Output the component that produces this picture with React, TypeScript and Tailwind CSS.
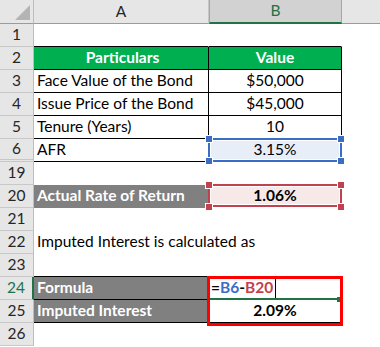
import React from 'react';

const font = { fontFamily: 'Lato, "Liberation Sans", sans-serif' };

type RowProps = {
  n: string;
  children?: React.ReactNode;
  active?: boolean;
  gapAfter?: boolean;
};

// one spreadsheet row: row header + cells + empty tail
const Row: React.FC<RowProps> = ({ n, children, active, gapAfter }) => (
  <div className="flex h-[23px] shrink-0 text-[15.5px]">
    <div
      className={`w-[34px] shrink-0 h-full flex items-center justify-center bg-[#e6e6e6] text-[15.5px] ${
        active ? 'border-r-2 border-r-[#217346] text-[#217346]' : 'border-r border-r-[#bdbdbd] text-[#262626]'
      } ${gapAfter ? 'border-b-[3px] border-b-[#c6c6c6] border-double' : 'border-b border-b-[#c8c8c8]'}`}
    >
      {n}
    </div>
    {children}
    <div className="flex-1" />
  </div>
);

const CornerMarks: React.FC<{ color: string }> = ({ color }) => {
  const sq = `absolute w-[6px] h-[6px] ${color} outline outline-1 outline-white`;
  return (
    <>
      <div className={`${sq} -left-[3px] -top-[3px]`} />
      <div className={`${sq} -right-[3px] -top-[3px]`} />
      <div className={`${sq} -left-[3px] -bottom-[3px]`} />
      <div className={`${sq} -right-[3px] -bottom-[3px]`} />
    </>
  );
};

export default function App() {
  const aBase = 'w-[175px] shrink-0 h-full flex items-center pl-[3px] border-b border-r whitespace-nowrap';
  const bBase = 'w-[133px] shrink-0 h-full flex items-center justify-center border-b border-r relative';

  return (
    <div className="w-[380px] h-[347px] bg-white text-black overflow-hidden relative flex flex-col" style={font}>
      {/* column headers */}
      <div className="flex h-[24px] shrink-0 bg-[#e6e6e6] text-[15.5px] text-[#262626]">
        <div className="w-[34px] shrink-0 h-full border-r border-r-[#bdbdbd] border-b border-b-[#9b9b9b] relative">
          <div className="absolute left-[15px] top-[5px] w-0 h-0 border-l-[15px] border-l-transparent border-b-[15px] border-b-[#b4b4b4]" />
        </div>
        <div className="w-[175px] shrink-0 h-full flex items-center justify-center border-b border-b-[#9b9b9b] border-r border-r-[#c6c6c6]">
          A
        </div>
        <div className="w-[133px] shrink-0 h-full flex items-center justify-center bg-[#d2d2d2] border-b-2 border-b-[#217346] border-l border-l-[#a6a6a6] border-r border-r-[#a6a6a6] text-[#217346]">
          B
        </div>
        <div className="flex-1 h-full border-b border-b-[#9b9b9b]" />
      </div>

      <Row n="1">
        <div className={`${aBase} border-b-black border-r-transparent`} />
        <div className={`${bBase} border-b-black border-r-transparent`} />
      </Row>

      <Row n="2">
        <div className={`${aBase} justify-center bg-[#00b050] text-white font-bold border-black`}>Particulars</div>
        <div className={`${bBase} bg-[#00b050] text-white font-bold border-black`}>Value</div>
      </Row>

      <Row n="3">
        <div className={`${aBase} border-black`}>Face Value of the Bond</div>
        <div className={`${bBase} border-black`}>$50,000</div>
      </Row>

      <Row n="4">
        <div className={`${aBase} border-black`}>Issue Price of the Bond</div>
        <div className={`${bBase} border-black`}>$45,000</div>
      </Row>

      <Row n="5">
        <div className={`${aBase} border-black`}>Tenure (Years)</div>
        <div className={`${bBase} border-black`}>10</div>
      </Row>

      <Row n="6" gapAfter>
        <div className={`${aBase} border-black`}>AFR</div>
        <div className={`${bBase} border-black`}>
          <div className="absolute -left-px -top-px -right-px bottom-[-1px] border-2 border-[#3a6ec6] bg-[#e8eef8] shadow-[inset_0_0_0_1px_#ffffff]" />
          <span className="relative">3.15%</span>
          <CornerMarks color="bg-[#3a6ec6]" />
        </div>
      </Row>

      <Row n="19">
        <div className={`${aBase} border-b-transparent border-r-transparent`} />
        <div className={`${bBase} border-b-transparent border-r-transparent`} />
      </Row>

      <Row n="20">
        <div className={`${aBase} bg-[#808080] text-white font-bold border-b-transparent border-r-white`}>
          Actual Rate of Return
        </div>
        <div className={`${bBase} font-bold border-b-transparent border-r-transparent`}>
          <div className="absolute -left-px -top-px -right-px bottom-0 border-2 border-[#c3404e] bg-[#f8e9e9] shadow-[inset_0_0_0_1px_#ffffff]" />
          <span className="relative">1.06%</span>
          <CornerMarks color="bg-[#c3404e]" />
        </div>
      </Row>

      <Row n="21">
        <div className={`${aBase} border-b-transparent border-r-transparent`} />
        <div className={`${bBase} border-b-transparent border-r-transparent`} />
      </Row>

      <Row n="22">
        <div className={`${aBase} border-b-transparent border-r-transparent overflow-visible`}>
          Imputed Interest is calculated as
        </div>
        <div className={`${bBase} border-b-transparent border-r-transparent`} />
      </Row>

      <Row n="23">
        <div className={`${aBase} border-b-black border-r-transparent`} />
        <div className={`${bBase} border-b-black border-r-transparent`} />
      </Row>

      <Row n="24" active>
        <div className={`${aBase} bg-[#808080] text-white font-bold border-black`}>Formula</div>
        <div className={`${bBase} !justify-start pl-[2px] font-bold border-black`}>
          <span>=</span>
          <span className="text-[#3a6ec6]">B6</span>
          <span>-</span>
          <span className="text-[#c3404e]">B20</span>
          <span className="w-px h-[19px] bg-black ml-[2px]" />
          <div className="absolute left-[1px] right-[3px] -bottom-[1px] h-[2px] bg-[#217346]" />
          <div className="absolute right-[-1px] -bottom-[3px] w-[5px] h-[5px] bg-[#217346]" />
        </div>
      </Row>

      <Row n="25">
        <div className={`${aBase} bg-[#808080] text-white font-bold border-black`}>Imputed Interest</div>
        <div className={`${bBase} font-bold border-black`}>2.09%</div>
      </Row>

      <Row n="26">
        <div className={`${aBase} border-b-transparent border-r-transparent`} />
        <div className={`${bBase} border-b-transparent border-r-transparent`} />
      </Row>

      {/* red annotation box around B24:B25 */}
      <div className="absolute left-[207px] top-[276px] w-[136px] h-[50px] border-[3px] border-[#ff0000] pointer-events-none" />
    </div>
  );
}
